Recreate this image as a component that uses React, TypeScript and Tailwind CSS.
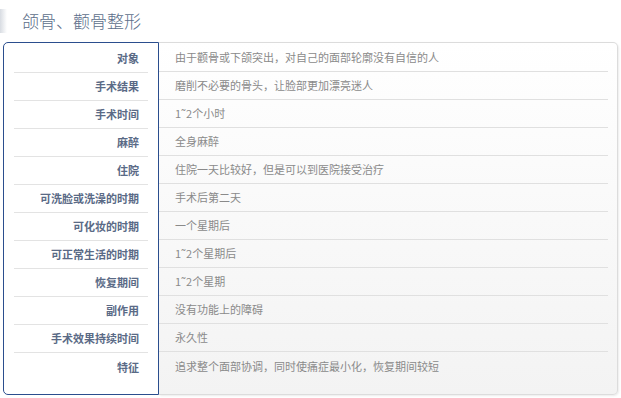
const rows: [string, string][] = [
  ["对象", "由于颧骨或下颌突出，对自己的面部轮廓没有自信的人"],
  ["手术结果", "磨削不必要的骨头，让脸部更加漂亮迷人"],
  ["手术时间", "1˜2个小时"],
  ["麻醉", "全身麻醉"],
  ["住院", "住院一天比较好，但是可以到医院接受治疗"],
  ["可洗脸或洗澡的时期", "手术后第二天"],
  ["可化妆的时期", "一个星期后"],
  ["可正常生活的时期", "1˜2个星期后"],
  ["恢复期间", "1˜2个星期"],
  ["副作用", "没有功能上的障碍"],
  ["手术效果持续时间", "永久性"],
  ["特征", "追求整个面部协调，同时使痛症最小化，恢复期间较短"],
];

export default function App() {
  return (
    <div
      className="w-[621px] h-[398px] bg-white"
      style={{ fontFamily: '"Noto Sans CJK SC", "Noto Sans", sans-serif' }}
    >
      {/* Title */}
      <div className="h-[42px] flex items-center relative">
        <div className="absolute left-0 top-[9px] w-[7px] h-[24px] bg-gradient-to-r from-[#d8dce2] to-white" />
        <h1 className="pl-[22px] pb-[1px] text-[17px] font-light text-[#5d6f8b] leading-none">
          颌骨、颧骨整形
        </h1>
      </div>

      {/* Table */}
      <div className="flex ml-[3px] w-[615px] h-[353px]">
        <div className="w-[156px] shrink-0 border border-[#2b4e8e] rounded-l-[5px] bg-white px-[10px] pt-[2px]">
          {rows.map(([label], i) => (
            <div
              key={label}
              className={`h-[28px] flex items-center justify-end pr-[9px] text-[11px] font-bold text-[#5a6a86] ${
                i < rows.length - 1 ? "border-b border-[#e3e3e3]" : ""
              }`}
            >
              {label}
            </div>
          ))}
        </div>
        <div className="flex-1 border border-l-0 border-[#dcdcdc] rounded-r-[5px] bg-gradient-to-b from-white to-[#f3f3f3] shadow-[1px_1px_2px_rgba(0,0,0,0.08)] pr-[9px] pt-[1px]">
          {rows.map(([label, value], i) => (
            <div
              key={label}
              className={`h-[28px] flex items-center pl-[16px] text-[11px] text-[#8a8a8a] ${
                i < rows.length - 1 ? "border-b border-[#e0e0e0]" : ""
              }`}
            >
              {value}
            </div>
          ))}
        </div>
      </div>
    </div>
  );
}
